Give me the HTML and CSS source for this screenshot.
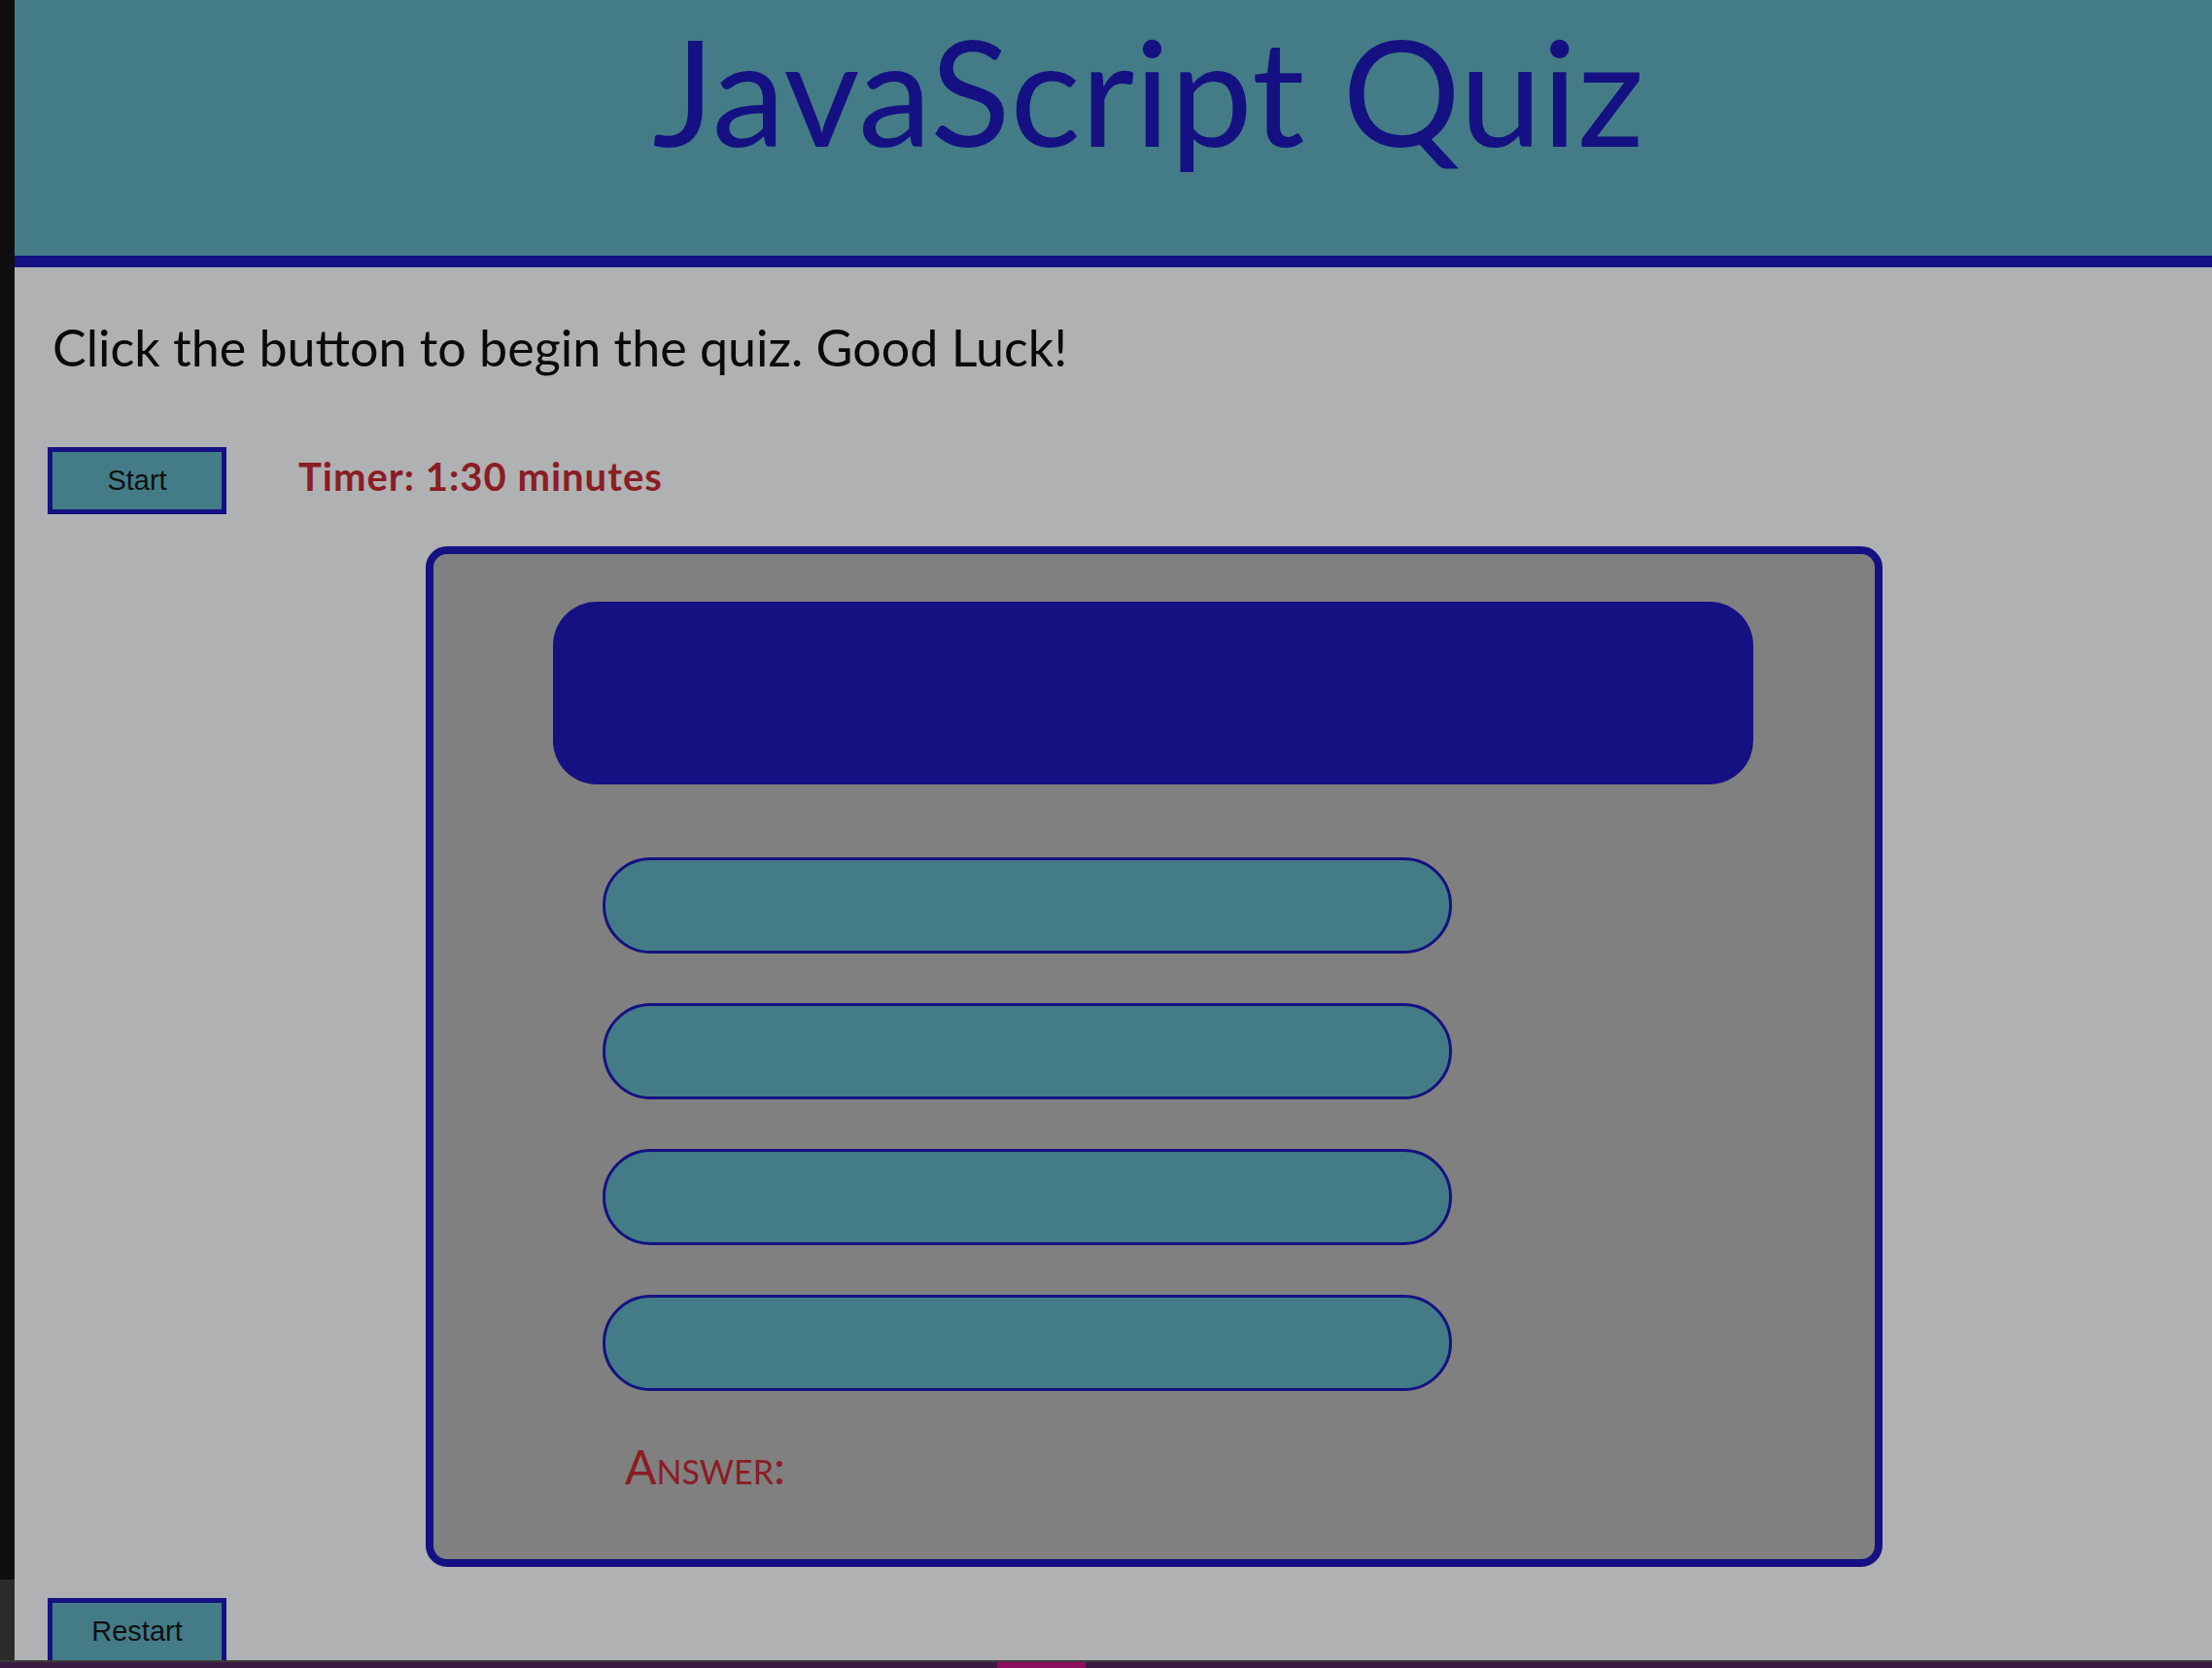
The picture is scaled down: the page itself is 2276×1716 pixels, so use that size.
FILE: index.html
```html
<!DOCTYPE html>
<html lang="en">
<head>
<meta charset="utf-8">
<title>JavaScript Quiz</title>
<link rel="stylesheet" href="styles.css">
</head>
<body>
<div class="screen">
  <div class="edge"></div>
  <div class="page">
    <header class="banner">
      <h1 class="title">JavaScript Quiz</h1>
    </header>
    <p class="intro">Click the button to begin the quiz. Good Luck!</p>
    <div class="controls">
      <button class="btn">Start</button>
      <div class="timer">Timer: 1:30 minutes</div>
    </div>
    <section class="quiz">
      <div class="question"></div>
      <div class="answers">
        <button class="choice"></button>
        <button class="choice"></button>
        <button class="choice"></button>
        <button class="choice"></button>
      </div>
      <div class="result">Answer:</div>
    </section>
    <div class="restart-row">
      <button class="btn">Restart</button>
    </div>
  </div>
  <div class="taskbar"><span class="task-active"></span></div>
</div>
</body>
</html>
```

FILE: styles.css
```css
html, body {
  margin: 0;
  padding: 0;
}
body {
  background: #2b2b2b;
  font-family: Lato, "Open Sans", sans-serif;
}
.screen {
  width: 2276px;
  height: 1716px;
  display: grid;
  grid-template-columns: 15px 1fr;
  grid-template-rows: 1708px 8px;
  overflow: hidden;
}
.edge {
  background: linear-gradient(to bottom, #0f0d0d 0, #0f0d0d 1625px, #2b2b2b 1625px, #2b2b2b 100%);
}
.page {
  background: #b0b1b3;
  overflow: hidden;
}
.taskbar {
  grid-column: 1 / 3;
  background: #3c1b43;
  border-top: 2px solid #3a3a3a;
  box-sizing: border-box;
  display: flex;
  padding-left: 1026px;
}
.task-active {
  width: 91px;
  background: #8c0e5e;
}
.banner {
  box-sizing: border-box;
  height: 275px;
  background: #437c87;
  border-bottom: 12px solid #151182;
  display: flex;
  justify-content: center;
  align-items: flex-start;
  padding-left: 72px;
}
.title {
  margin: 0;
  padding-top: 1px;
  font-family: Lato, "Open Sans", sans-serif;
  font-weight: 400;
  font-size: 152px;
  line-height: 182px;
  color: #151182;
}
.intro {
  margin: 50px 0 0;
  padding-left: 39px;
  font-size: 52px;
  line-height: 64px;
  color: #0a0a0a;
}
.controls {
  margin-top: 71px;
  padding-left: 34px;
  display: flex;
  align-items: flex-start;
  gap: 74px;
}
.btn {
  box-sizing: border-box;
  width: 184px;
  height: 69px;
  margin: 0;
  padding: 0;
  background: #437c87;
  border: 5px solid #151182;
  font-family: "Liberation Sans", Arial, sans-serif;
  font-size: 29px;
  color: #111;
}
.timer {
  margin-top: 6px;
  font-weight: 700;
  font-size: 40px;
  line-height: 48px;
  letter-spacing: 1px;
  color: #8b1d24;
}
.quiz {
  box-sizing: border-box;
  margin: 33px 0 0 423px;
  width: 1499px;
  height: 1050px;
  background: #808080;
  border: 8px solid #151182;
  border-radius: 22px;
  padding: 49px 0 0 123px;
}
.question {
  width: 1235px;
  height: 188px;
  background: #151182;
  border-radius: 45px;
}
.answers {
  margin: 75px 0 0 51px;
  display: flex;
  flex-direction: column;
  gap: 51px;
}
.choice {
  box-sizing: border-box;
  width: 874px;
  height: 99px;
  margin: 0;
  padding: 0;
  background: #437c87;
  border: 3px solid #151182;
  border-radius: 50px;
}
.result {
  margin: 49px 0 0 74px;
  font-size: 48px;
  line-height: 58px;
  font-variant: small-caps;
  color: #8b1d24;
}
.restart-row {
  margin-top: 32px;
  padding-left: 34px;
}
```
